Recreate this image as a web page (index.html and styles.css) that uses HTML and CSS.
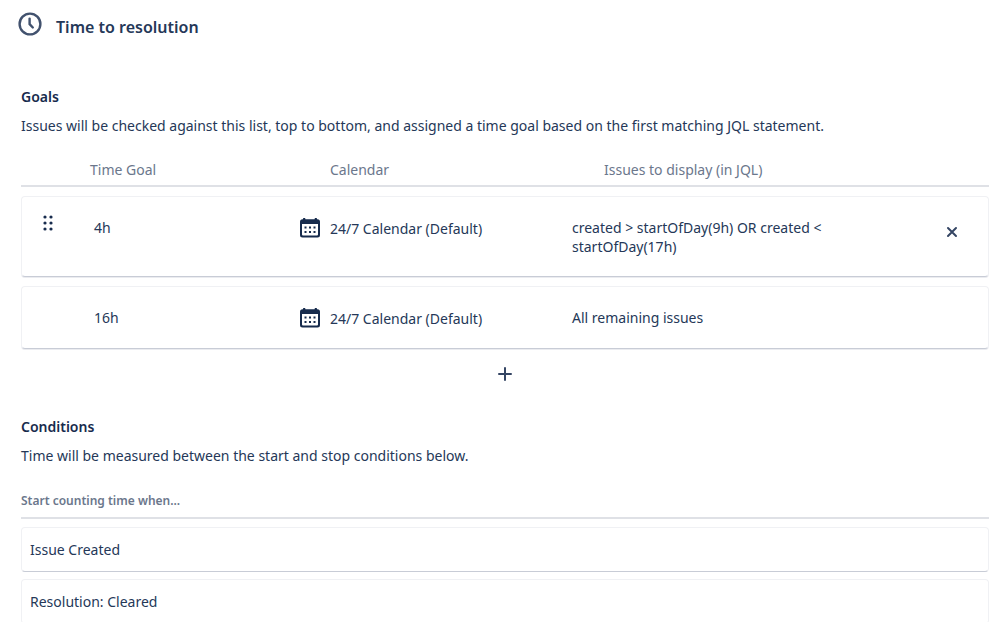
FILE: index.html
```html
<!DOCTYPE html>
<html lang="en">
<head>
    <meta charset="UTF-8">
    <meta name="viewport" content="width=device-width, initial-scale=1.0">
    <title>Time to resolution</title>
    <link rel="stylesheet" href="styles.css">
</head>
<body>
    <header class="sla-header">
        <svg class="clock-icon" viewBox="0 0 24 24" width="24" height="24" aria-hidden="true">
            <circle cx="12" cy="12" r="10.4"/>
            <path d="M11.6 6.6v5.6l3.2 3.3"/>
        </svg>
        <h1>Time to resolution</h1>
    </header>

    <main class="content">
        <section class="goals">
            <h2>Goals</h2>
            <p>Issues will be checked against this list, top to bottom, and assigned a time goal based on the first matching JQL statement.</p>
            <table class="goal-table">
                <thead>
                    <tr>
                        <th class="col-handle"></th>
                        <th class="col-goal">Time Goal</th>
                        <th class="col-calendar">Calendar</th>
                        <th class="col-jql">Issues to display (in JQL)</th>
                        <th class="col-remove"></th>
                    </tr>
                </thead>
                <tbody>
                    <tr>
                        <td class="handle">
                            <button type="button" class="icon-button" aria-label="Reorder goal">
                                <svg class="drag-icon" viewBox="0 0 10 16" width="10" height="16">
                                    <circle cx="2" cy="2" r="1.6"/>
                                    <circle cx="8" cy="2" r="1.6"/>
                                    <circle cx="2" cy="8" r="1.6"/>
                                    <circle cx="8" cy="8" r="1.6"/>
                                    <circle cx="2" cy="14" r="1.6"/>
                                    <circle cx="8" cy="14" r="1.6"/>
                                </svg>
                            </button>
                        </td>
                        <td class="goal">4h</td>
                        <td>
                            <div class="calendar">
                                <svg class="calendar-icon" viewBox="0 0 20 20" width="20" height="20" aria-hidden="true">
                                    <path fill-rule="evenodd" d="M3 1.200V1a1 1 0 0 1 2.400 0v.2h9.200V1a1 1 0 0 1 2.400 0v.2h.5a2.500 2.500 0 0 1 2.500 2.500V17a2.500 2.500 0 0 1-2.500 2.500h-15A2.500 2.500 0 0 1 0 17V3.700a2.500 2.500 0 0 1 2.500-2.500zM2 6V16.500a1 1 0 0 0 1 1h14a1 1 0 0 0 1-1V6z"/>
                                    <path d="M4.500 8.500h2v2h-2zM9 8.500h2v2H9zM13.500 8.500h2v2h-2zM4.500 13h2v2h-2zM9 13h2v2H9zM13.500 13h2v2h-2z"/>
                                </svg>
                                <span>24/7 Calendar (Default)</span>
                            </div>
                        </td>
                        <td>created &gt; startOfDay(9h) OR created &lt; startOfDay(17h)</td>
                        <td class="remove">
                            <button type="button" class="icon-button" aria-label="Remove goal">
                                <svg class="line-icon" viewBox="0 0 12 12" width="12" height="12">
                                    <path d="M2 2l8 8M10 2l-8 8"/>
                                </svg>
                            </button>
                        </td>
                    </tr>
                    <tr>
                        <td class="handle"></td>
                        <td class="goal">16h</td>
                        <td>
                            <div class="calendar">
                                <svg class="calendar-icon" viewBox="0 0 20 20" width="20" height="20" aria-hidden="true">
                                    <path fill-rule="evenodd" d="M3 1.200V1a1 1 0 0 1 2.400 0v.2h9.200V1a1 1 0 0 1 2.400 0v.2h.5a2.500 2.500 0 0 1 2.500 2.500V17a2.500 2.500 0 0 1-2.500 2.500h-15A2.500 2.500 0 0 1 0 17V3.700a2.500 2.500 0 0 1 2.500-2.500zM2 6V16.500a1 1 0 0 0 1 1h14a1 1 0 0 0 1-1V6z"/>
                                    <path d="M4.500 8.500h2v2h-2zM9 8.500h2v2H9zM13.500 8.500h2v2h-2zM4.500 13h2v2h-2zM9 13h2v2H9zM13.500 13h2v2h-2z"/>
                                </svg>
                                <span>24/7 Calendar (Default)</span>
                            </div>
                        </td>
                        <td>All remaining issues</td>
                        <td class="remove"></td>
                    </tr>
                </tbody>
            </table>
            <div class="add-row">
                <button type="button" class="icon-button" aria-label="Add goal">
                    <svg class="line-icon" viewBox="0 0 14 14" width="14" height="14">
                        <path d="M7 1v12M1 7h12"/>
                    </svg>
                </button>
            </div>
        </section>

        <section class="conditions">
            <h2>Conditions</h2>
            <p>Time will be measured between the start and stop conditions below.</p>
            <h3>Start counting time when...</h3>
            <ul class="condition-list">
                <li>Issue Created</li>
                <li>Resolution: Cleared</li>
            </ul>
        </section>
    </main>
</body>
</html>
```
FILE: styles.css
```css
* {
    box-sizing: border-box;
}

body {
    margin: 0;
    background-color: #fff;
    color: #253858;
    font-family: "Noto Sans", "Open Sans", sans-serif;
    font-size: 14px;
    line-height: 19px;
}

h1, h2, h3, p {
    margin: 0;
}

/* Header */
.sla-header {
    display: flex;
    align-items: center;
    gap: 14px;
    padding: 11px 18px 0;
}

.sla-header h1 {
    padding-top: 6px;
    font-size: 16px;
    font-weight: 600;
    line-height: 20px;
}

.clock-icon {
    fill: none;
    stroke: #42526e;
    stroke-width: 2.4;
    stroke-linecap: round;
    stroke-linejoin: round;
}

/* Sections */
.content {
    padding: 50px 9px 0 21px;
}

h2 {
    color: #172b4d;
    font-size: 14px;
    font-weight: 600;
    line-height: 20px;
}

.content p {
    padding-top: 9px;
    line-height: 20px;
}

/* Goals */
.goal-table {
    width: 100%;
    margin-top: 15px;
    table-layout: fixed;
    border-collapse: separate;
    border-spacing: 0 9px;
}

.goal-table th {
    padding: 0 0 6px;
    border-bottom: 2px solid #dfe1e6;
    color: #6b778c;
    font-weight: 400;
    text-align: left;
}

.goal-table .col-handle {
    width: 69px;
}

.goal-table .col-goal {
    width: 210px;
}

.goal-table .col-calendar {
    width: 272px;
    padding-left: 30px;
}

.goal-table .col-jql {
    padding-left: 32px;
}

.goal-table .col-remove {
    width: 72px;
}

.goal-table td {
    padding: 21px 0 20px;
    border: 0 solid #f0f1f4;
    border-width: 1px 0;
    border-bottom-color: #c8ccd6;
    box-shadow: 0 1px 0 #ebecf0;
    vertical-align: top;
}

.goal-table td:first-child {
    border-left-width: 1px;
    border-radius: 4px 0 0 4px;
}

.goal-table td:last-child {
    border-right-width: 1px;
    border-radius: 0 4px 4px 0;
}

.goal-table .goal {
    padding-left: 4px;
}

.goal-table .handle {
    padding-top: 18px;
    padding-left: 21px;
}

.goal-table .remove {
    padding-top: 29px;
    padding-left: 29px;
}

.calendar {
    display: flex;
    align-items: center;
    gap: 10px;
}

.calendar-icon,
.drag-icon {
    fill: #172b4d;
}

.icon-button {
    display: flex;
    padding: 0;
    border: 0;
    background: none;
    cursor: pointer;
}

.line-icon {
    fill: none;
    stroke: #344563;
    stroke-width: 2;
    stroke-linecap: round;
}

.add-row {
    display: flex;
    justify-content: center;
    padding-top: 9px;
}

/* Conditions */
.conditions {
    padding-top: 36px;
}

h3 {
    padding: 25px 0 6px;
    border-bottom: 2px solid #dfe1e6;
    color: #6b778c;
    font-size: 12px;
    font-weight: 600;
    line-height: 20px;
}

.condition-list {
    display: flex;
    flex-direction: column;
    gap: 7px;
    margin: 0;
    padding: 8px 0 0;
    list-style: none;
}

.condition-list li {
    padding: 12px 8px;
    border: 1px solid #f0f1f4;
    border-bottom-color: #c8ccd6;
    border-radius: 4px;
}
```
